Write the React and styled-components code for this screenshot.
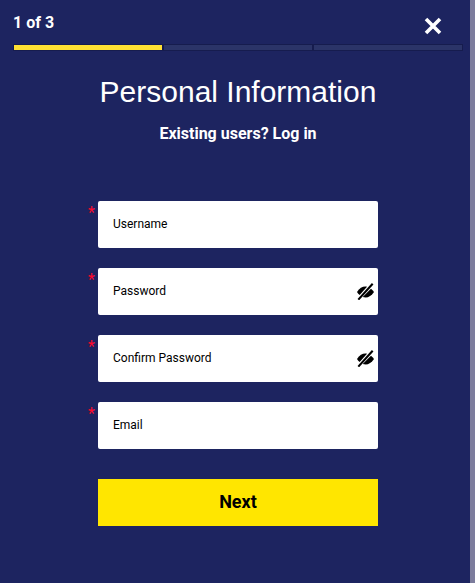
import React from "react";
import styled, { createGlobalStyle } from "styled-components";

const GlobalStyle = createGlobalStyle`
  html, body {
    margin: 0;
    padding: 0;
    height: 100%;
    overflow: hidden;
    background: #1d2460;
  }
`;

const Page = styled.div`
  display: flex;
  width: 475px;
  height: 583px;
  font-family: Roboto, sans-serif;
`;

const Panel = styled.div`
  flex: 1;
  background: #1d2460;
  padding: 14px 7px 0 13px;
  box-sizing: border-box;
`;

const ScrollTrack = styled.div`
  width: 5px;
  background: #7c7c9c;
`;

const TopRow = styled.div`
  display: flex;
  justify-content: space-between;
  align-items: flex-start;
  height: 30px;
`;

const Counter = styled.span`
  color: #fff;
  font-size: 16px;
  font-weight: 700;
  line-height: 18px;
`;

const Close = styled.button`
  display: flex;
  margin: 3px 21px 0 0;
  padding: 0;
  border: 0;
  background: none;
  color: #fff;
`;

const Progress = styled.div`
  display: grid;
  grid-template-columns: repeat(3, 150px);
  height: 7px;
`;

const Segment = styled.div`
  box-sizing: border-box;
  border: 1px solid #161c4e;
  background: ${(p) => (p.$done ? "#ffe033" : "#2b3468")};
`;

const Title = styled.h1`
  margin: 23px 0 0;
  color: #fff;
  font-family: "Liberation Sans", Arial, sans-serif;
  font-size: 30px;
  font-weight: 400;
  line-height: 36px;
  text-align: center;
`;

const LoginLine = styled.p`
  margin: 14px 0 0;
  color: #fff;
  font-size: 16px;
  font-weight: 700;
  line-height: 20px;
  text-align: center;
`;

const Form = styled.form`
  display: flex;
  flex-direction: column;
  gap: 20px;
  width: 280px;
  margin: 57px 0 0 85px;
`;

const Field = styled.div`
  position: relative;
  display: flex;
  align-items: center;
  justify-content: space-between;
  box-sizing: border-box;
  height: 47px;
  padding: 0 4px 2px 15px;
  border-radius: 2px;
  background: #fff;
`;

const Star = styled.span`
  position: absolute;
  left: -10px;
  top: 3px;
  color: #ff0a2c;
  font-size: 16px;
  line-height: 18px;
`;

const Label = styled.span`
  color: #000;
  font-size: 12px;
`;

const EyeSlot = styled.span`
  display: flex;
  margin-top: 1px;
`;

const Next = styled.button`
  width: 280px;
  height: 47px;
  margin: 30px 0 0 85px;
  padding: 0 0 2px;
  border: 0;
  background: #ffe600;
  color: #000;
  font-family: Roboto, sans-serif;
  font-size: 18px;
  font-weight: 700;
`;

const CloseIcon = () => (
  <svg width="18" height="18" viewBox="0 0 18 18">
    <path d="M2 2 L16 16 M16 2 L2 16" stroke="currentColor" strokeWidth="3.6" />
  </svg>
);

const EyeOffIcon = () => (
  <svg width="17" height="17" viewBox="0 0 18 18">
    <path
      d="M0 9.5 C2.6 5.6 5.6 3.7 8.8 3.7 C9.4 3.7 10 3.8 10.6 3.9 L2.8 12.6 C1.7 11.8 0.8 10.8 0 9.5 Z"
      fill="#000"
    />
    <path
      d="M14.8 6 C16 6.9 17.1 8 18 9.5 C15.4 13.4 12.4 15.3 9.2 15.3 C8.2 15.3 7.1 15.1 6 14.8 Z"
      fill="#000"
    />
    <path d="M1.4 17.6 L16.6 0.8" stroke="#000" strokeWidth="2.2" />
  </svg>
);

const fields = [
  { label: "Username" },
  { label: "Password", secret: true },
  { label: "Confirm Password", secret: true },
  { label: "Email" },
];

export default function App() {
  return (
    <Page>
      <GlobalStyle />
      <Panel>
        <TopRow>
          <Counter>1 of 3</Counter>
          <Close type="button" aria-label="Close">
            <CloseIcon />
          </Close>
        </TopRow>
        <Progress>
          <Segment $done />
          <Segment />
          <Segment />
        </Progress>
        <Title>Personal Information</Title>
        <LoginLine>Existing users? Log in</LoginLine>
        <Form>
          {fields.map((f) => (
            <Field key={f.label}>
              <Star>*</Star>
              <Label>{f.label}</Label>
              {f.secret && (
                <EyeSlot>
                  <EyeOffIcon />
                </EyeSlot>
              )}
            </Field>
          ))}
        </Form>
        <Next type="button">Next</Next>
      </Panel>
      <ScrollTrack />
    </Page>
  );
}
